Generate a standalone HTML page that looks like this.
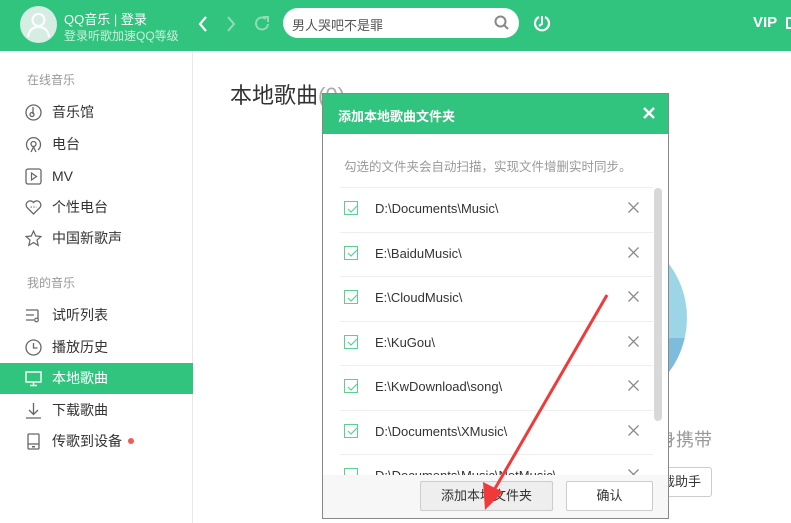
<!DOCTYPE html>
<html><head><meta charset="utf-8"><style>
*{margin:0;padding:0;box-sizing:border-box}
body{width:791px;height:523px;overflow:hidden;position:relative;background:#fff;font-family:"Liberation Sans","Noto Sans CJK SC",sans-serif;}
.hdr{position:absolute;left:0;top:0;width:791px;height:51px;background:#31c47f}
.abs{position:absolute}
.side{position:absolute;left:0;top:51px;width:193px;height:472px;border-right:1px solid #e8e8e8;background:#fff}
.sec{position:absolute;left:27px;font-size:12px;color:#999}
.item{position:absolute;left:0;width:193px;height:31px;font-size:14px;color:#333;line-height:31px;padding-left:52px}
.item svg{position:absolute;left:25px;top:7px}
.dlg{position:absolute;left:322px;top:93px;width:347px;height:426px;border:1px solid #888;background:#fff;overflow:hidden}
.row{position:absolute;left:17px;width:313px;height:44px;border-top:1px solid #eee;font-size:13px;color:#333}
.cb{position:absolute;left:4px;top:13px;width:14px;height:14px;border:1px solid #5ccf93}
.row .t{position:absolute;left:35px;top:13px}
.row svg.x{position:absolute;left:288px;top:14px}
.btn{position:absolute;top:387px;height:30px;border:1px solid #ccc;border-radius:2px;font-size:13px;color:#333;text-align:center;line-height:28px}
</style></head><body>
<div class="hdr">
 <div class="abs" style="left:20px;top:6px;width:37px;height:37px;border-radius:50%;background:#d5ede3"></div>
 <svg class="abs" style="left:20px;top:6px" width="37" height="37"><circle cx="18.5" cy="14" r="6" fill="none" stroke="#fff" stroke-width="2"/><path d="M8 31c1-7 5-10 10.5-10s9.5 3 10.5 10" fill="none" stroke="#fff" stroke-width="2"/></svg>
 <div class="abs" style="left:64px;top:9px;font-size:13px;color:#fff">QQ音乐 | 登录</div>
 <div class="abs" style="left:64px;top:27px;font-size:12px;color:#c8f0dc">登录听歌加速QQ等级</div>
 <svg class="abs" style="left:196px;top:14px" width="80" height="20"><path d="M10 3l-6 7 6 7" fill="none" stroke="#fff" stroke-width="2.2"/><path d="M32 3l6 7-6 7" fill="none" stroke="#8fdcb6" stroke-width="2"/><path d="M70 5a6 6 0 1 0 2 5" fill="none" stroke="#8fdcb6" stroke-width="2"/><path d="M67 3h5v5" fill="none" stroke="#8fdcb6" stroke-width="2"/></svg>
 <div class="abs" style="left:283px;top:8px;width:236px;height:30px;border-radius:15px;background:#fff;font-size:13px;color:#555;padding:7px 0 0 9px">男人哭吧不是罪</div>
 <svg class="abs" style="left:494px;top:15px" width="16" height="16"><circle cx="6.5" cy="6.5" r="5" fill="none" stroke="#888" stroke-width="2"/><path d="M10 10l4 4" stroke="#888" stroke-width="2"/></svg>
 <svg class="abs" style="left:533px;top:13px" width="18" height="20"><path d="M6 4a7 7 0 1 0 6 0" fill="none" stroke="#fff" stroke-width="2.2"/><path d="M9 3v8l-3 2" fill="none" stroke="#fff" stroke-width="2"/></svg>
 <div class="abs" style="left:753px;top:14px;font-size:15px;font-weight:bold;color:#fff">VIP</div>
 <div class="abs" style="left:786px;top:17px;width:8px;height:12px;border:2px solid #fff"></div>
</div>
<div class="side">
 <div class="sec" style="top:20px">在线音乐</div>
 <div class="item" style="top:46px"><svg width="17" height="17"><circle cx="8.5" cy="8.5" r="7.5" fill="none" stroke="#666" stroke-width="1.3"/><path d="M8 3v7" stroke="#666" stroke-width="1.3"/><circle cx="7" cy="10.5" r="2" fill="none" stroke="#666" stroke-width="1.3"/></svg>音乐馆</div>
 <div class="item" style="top:78px"><svg width="17" height="17"><path d="M4 14a7 7 0 1 1 9 0" fill="none" stroke="#666" stroke-width="1.3"/><circle cx="8.5" cy="8" r="2.5" fill="none" stroke="#666" stroke-width="1.3"/><path d="M6 16l2.5-5 2.5 5" fill="none" stroke="#666" stroke-width="1.3"/></svg>电台</div>
 <div class="item" style="top:110px"><svg width="17" height="17"><rect x="1" y="1" width="15" height="15" rx="2" fill="none" stroke="#666" stroke-width="1.3"/><path d="M6.5 5l5 3.5-5 3.5z" fill="none" stroke="#666" stroke-width="1.2"/></svg>MV</div>
 <div class="item" style="top:141px"><svg width="17" height="17"><path d="M8.5 15L2 8.5a3.8 3.8 0 0 1 6.5-5 3.8 3.8 0 0 1 6.5 5z" fill="none" stroke="#666" stroke-width="1.3"/><path d="M5.5 8h6" stroke="#666" stroke-dasharray="1.5 1.2"/></svg>个性电台</div>
 <div class="item" style="top:172px"><svg width="17" height="17"><path d="M8.5 1l2.2 5 5.3.5-4 3.6 1.2 5.3-4.7-2.8-4.7 2.8 1.2-5.3-4-3.6 5.3-.5z" fill="none" stroke="#666" stroke-width="1.2"/></svg>中国新歌声</div>
 <div class="sec" style="top:223px">我的音乐</div>
 <div class="item" style="top:249px"><svg width="17" height="17"><path d="M1 3h12M1 8h8M1 13h8M13 3v9" fill="none" stroke="#666" stroke-width="1.3"/><circle cx="11.5" cy="13" r="1.8" fill="none" stroke="#666" stroke-width="1.2"/></svg>试听列表</div>
 <div class="item" style="top:281px"><svg width="17" height="17"><circle cx="8.5" cy="8.5" r="7.5" fill="none" stroke="#666" stroke-width="1.3"/><path d="M8.5 4v5h4" fill="none" stroke="#666" stroke-width="1.3"/></svg>播放历史</div>
 <div class="item" style="top:312px;background:#31c47f;color:#fff"><svg width="17" height="17"><rect x="1" y="2" width="15" height="10" fill="none" stroke="#fff" stroke-width="1.4"/><path d="M8.5 12v3M5 15.5h7" stroke="#fff" stroke-width="1.4"/></svg>本地歌曲</div>
 <div class="item" style="top:344px"><svg width="17" height="17"><path d="M8.5 1v11M4 8l4.5 4.5L13 8M1 16h15" fill="none" stroke="#666" stroke-width="1.3"/></svg>下载歌曲</div>
 <div class="item" style="top:375px"><svg width="17" height="17"><rect x="3" y="1" width="11" height="15" rx="1" fill="none" stroke="#666" stroke-width="1.3"/><path d="M3 11h11" stroke="#666" stroke-width="1.3"/><rect x="7" y="13" width="3" height="1.5" fill="#666"/></svg>传歌到设备<span style="display:inline-block;width:6px;height:6px;border-radius:50%;background:#f25a5a;margin:0 0 2px 6px"></span></div>
</div>
<div class="abs" style="left:230px;top:78px;font-size:22px;color:#333">本地歌曲<span style="color:#aaa">(0)</span></div>
<div class="abs" style="left:507px;top:228px;width:180px;height:180px;border-radius:50%;background:linear-gradient(#9cd5e6 0 61%,#7dbcdc 61%)"></div>
<div class="abs" style="left:640px;top:426px;font-size:18px;color:#999">随身携带</div>
<div class="abs" style="left:600px;top:467px;width:112px;height:30px;border:1px solid #ccc;border-radius:3px;font-size:13px;color:#333;line-height:28px;text-align:right;padding-right:10px">下载助手</div>
<div class="dlg">
 <div class="abs" style="left:0;top:0;width:347px;height:40px;background:#31c47f;color:#fff;font-size:13px;font-weight:bold;padding:12px 0 0 15px">添加本地歌曲文件夹</div>
 <svg class="abs" style="left:320px;top:13px" width="12" height="12"><path d="M1 1l10 10M11 1L1 11" stroke="#fff" stroke-width="2.5"/></svg>
 <div class="abs" style="left:21px;top:62px;font-size:12.5px;color:#999">勾选的文件夹会自动扫描，实现文件增删实时同步。</div>
 <div class="row" style="top:93px"><div class="cb"></div><div class="t">D:\Documents\Music\</div><svg class="x" width="11" height="11"><path d="M0.5 .5l10 10M10.5 .5l-10 10" stroke="#888" stroke-width="1.3"/></svg></div>
 <div class="row" style="top:138px"><div class="cb"></div><div class="t">E:\BaiduMusic\</div><svg class="x" width="11" height="11"><path d="M0.5 .5l10 10M10.5 .5l-10 10" stroke="#888" stroke-width="1.3"/></svg></div>
 <div class="row" style="top:182px"><div class="cb"></div><div class="t">E:\CloudMusic\</div><svg class="x" width="11" height="11"><path d="M0.5 .5l10 10M10.5 .5l-10 10" stroke="#888" stroke-width="1.3"/></svg></div>
 <div class="row" style="top:227px"><div class="cb"></div><div class="t">E:\KuGou\</div><svg class="x" width="11" height="11"><path d="M0.5 .5l10 10M10.5 .5l-10 10" stroke="#888" stroke-width="1.3"/></svg></div>
 <div class="row" style="top:271px"><div class="cb"></div><div class="t">E:\KwDownload\song\</div><svg class="x" width="11" height="11"><path d="M0.5 .5l10 10M10.5 .5l-10 10" stroke="#888" stroke-width="1.3"/></svg></div>
 <div class="row" style="top:316px"><div class="cb"></div><div class="t">D:\Documents\XMusic\</div><svg class="x" width="11" height="11"><path d="M0.5 .5l10 10M10.5 .5l-10 10" stroke="#888" stroke-width="1.3"/></svg></div>
 <div class="row" style="top:360px"><div class="cb"></div><div class="t">D:\Documents\Music\NetMusic\</div><svg class="x" width="11" height="11"><path d="M0.5 .5l10 10M10.5 .5l-10 10" stroke="#888" stroke-width="1.3"/></svg></div>
 <svg class="abs" style="left:0;top:0" width="347" height="380"><g fill="none" stroke="#5ccf93" stroke-width="1.2"><path d="M25 115l3 3 6-6M25 159l3 3 6-6M25 204l3 3 6-6M25 248l3 3 6-6M25 293l3 3 6-6M25 337l3 3 6-6"/></g></svg>
 <div class="abs" style="left:331px;top:94px;width:8px;height:233px;border-radius:4px;background:#d8d8d8"></div>
 <div class="abs" style="left:0;top:381px;width:347px;height:45px;background:#f7f7f7"></div>
 <div class="btn" style="left:97px;width:133px;background:#eee">添加本地文件夹</div>
 <div class="btn" style="left:243px;width:87px;background:#fff">确认</div>
</div>
<svg class="abs" style="left:0;top:0" width="791" height="523"><path d="M607 295L493 492" stroke="#f03a3a" stroke-width="3"/><path d="M485 510l-2-28 20 10z" fill="#f03a3a"/></svg>
</body></html>
